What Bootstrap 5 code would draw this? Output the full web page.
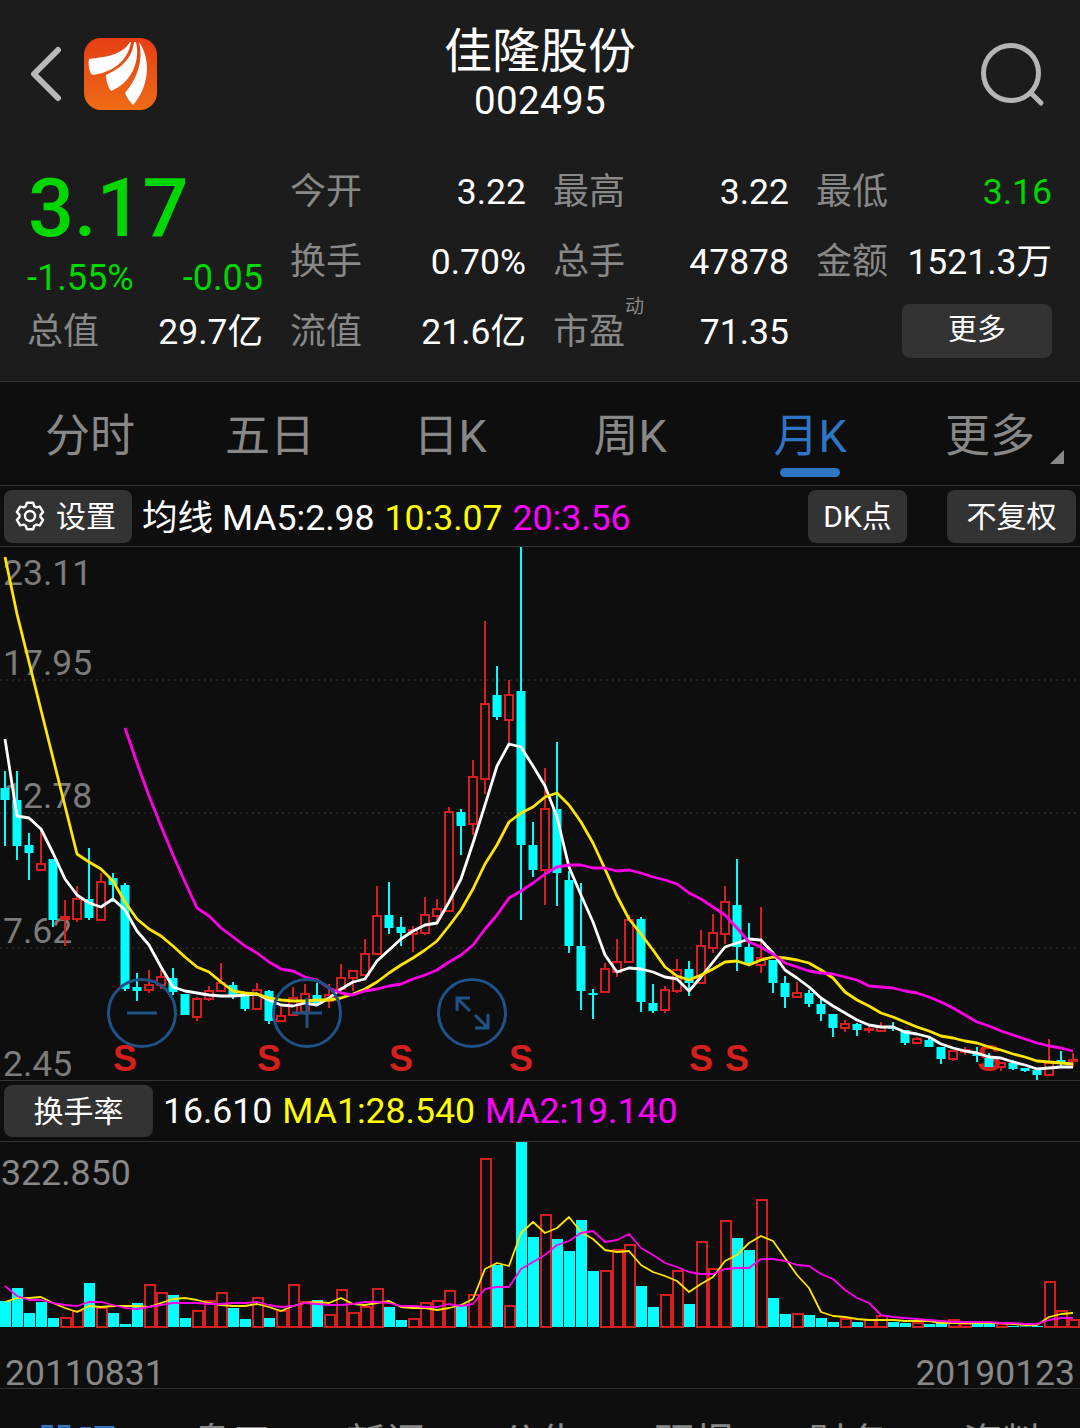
<!DOCTYPE html>
<html lang="zh-CN">

<head>
    <meta charset="UTF-8">
    <meta name="viewport" content="width=device-width, initial-scale=1.0">
    <title>佳隆股份 002495</title>

    <link href="https://cdn.jsdelivr.net/npm/bootstrap@5.3.3/dist/css/bootstrap.min.css" rel="stylesheet">
    <script src="https://cdn.jsdelivr.net/npm/bootstrap@5.3.3/dist/js/bootstrap.bundle.min.js"></script>

    <style>
        html, body { width: 1080px; height: 1428px; overflow: hidden; }
        body { background: #0e0e0e; color: #fff; font-family: "Roboto", "Noto Sans CJK SC", sans-serif; }
        .c-green { color: #00d600; }
        .c-yellow { color: #ffff00; }
        .c-pink { color: #ff00ff; }

        .quote-box { background: #1c1c1c; height: 382px; border-bottom: 1px solid #333; }
        .head-row { height: 158px; }
        .head-side { width: 200px; height: 156px; }
        .back-icon { margin: 46px 0 0 28px; }
        .logo-icon { margin: 38px 0 0 22px; }
        .search-icon { margin: 40px 34px 0 0; }
        .stock-name { font-size: 48px; line-height: 52px; padding-top: 26px; }
        .stock-code { font-size: 38.5px; line-height: 46px; letter-spacing: .4px; }

        .stat-left { width: 235px; margin-left: 28px; }
        .big-price { font-size: 81px; line-height: 102px; font-weight: 500; height: 102px; }
        .sub-row { font-size: 36px; height: 36px; line-height: 36px; margin: 0 0 2px -1px; }
        .stat-grid { display: grid; grid-template-columns: repeat(3, 235px); column-gap: 28px; margin-left: 28px; }
        .stat-cell { height: 70px; font-size: 35.5px; }
        .stat-label { color: #888; font-size: 36px; position: relative; margin: -2px 0 0 -1px; }
        .stat-tag { position: absolute; left: 72px; top: -12px; font-size: 19px; }
        .more-btn { width: 150px; height: 54px; font-size: 29px; margin-bottom: 4px; }

        .kbtn { background: #333; color: #fff; border: 0; border-radius: 8px; padding: 0; }
        .kbtn:hover { background: #333; color: #fff; }

        .period-tabs { height: 104px; border-bottom: 1px solid #333; }
        .period-tabs .nav-link { color: #888; font-size: 45px; line-height: 103px; padding: 3px 0 0; position: relative; }
        .period-tabs .nav-link.active { color: #2e75c3; }
        .period-tabs .nav-link.active::after { content: ""; position: absolute; left: 60px; bottom: 11px; width: 60px; height: 9px; border-radius: 5px; background: #2e75c3; }
        .more-corner { position: absolute; right: 16px; bottom: 24px; width: 0; height: 0; border-left: 14px solid transparent; border-bottom: 14px solid #888; }

        .info-row { height: 61px; border-bottom: 1px solid #333; }
        .set-btn { width: 128px; height: 53px; margin-left: 4px; padding-left: 11px; font-size: 30px; gap: 11px; }
        .ma-text { font-size: 35.6px; margin: 6px 0 0 10px; white-space: nowrap; }
        .ma-text span { margin-right: 10px; }
        .dk-btn { width: 99px; height: 53px; font-size: 30px; margin-right: 40px; }
        .fq-btn { width: 129px; height: 53px; font-size: 30px; margin-right: 4px; }

        .kline-box { height: 534px; border-bottom: 1px solid #333; }
        .kline-box svg, .vol-box svg { position: absolute; left: 0; top: 0; }
        .axis-label { position: absolute; left: 3px; color: #7c7c7c; font-size: 35.5px; line-height: 40px; }
        .sell-mark { position: absolute; top: 492px; width: 30px; text-align: center; color: #d61f1f; font: bold 36px/40px "Liberation Sans", sans-serif; }

        .vol-info { height: 61px; border-bottom: 1px solid #333; }
        .vol-btn { width: 149px; height: 52px; margin-left: 4px; font-size: 30px; }
        .vol-text { font-size: 35.6px; margin: 2px 0 0 10px; white-space: nowrap; }
        .vol-text span { margin-right: 10px; }
        .vol-box { height: 187px; }
        .vol-label { position: absolute; left: 1px; top: 11px; color: #888; font-size: 35.7px; line-height: 40px; }
        .date-row { height: 60px; padding: 24px 5px 0; color: #888; font-size: 35.5px; line-height: 40px; border-bottom: 1px solid #333; }

        .news-tabs .nav-link { color: #888; font-size: 40px; line-height: 110px; padding: 0; }
        .news-tabs .nav-link.active { color: #2e75c3; }
    </style>
</head>

<body>
    <div class="quote-box">
        <div class="head-row d-flex">
            <div class="head-side d-flex align-items-start">
                <svg class="back-icon" width="34" height="56" viewBox="0 0 34 56">
                    <path d="M30 4 L6 28 L30 52" fill="none" stroke="#b9b9b9" stroke-width="6" stroke-linecap="round" stroke-linejoin="round" />
                </svg>
                <svg class="logo-icon flex-shrink-0" width="73" height="72" viewBox="0 0 73 72">
                    <defs>
                        <linearGradient id="logoFill" x1="0" y1="0" x2="0" y2="1">
                            <stop offset="0" stop-color="#e63e14" />
                            <stop offset="1" stop-color="#ee6c16" />
                        </linearGradient>
                    </defs>
                    <rect width="73" height="72" rx="17" fill="url(#logoFill)" />
                    <path d="M46 4 C38 17 22 19 5 21 C4 27 5 33 8 37 C27 35 44 24 47 4 Z" fill="#fff" />
                    <path d="M50 4 C48 22 35 31 22 37 C22 43 24 49 27 53 C45 46 57 26 52 4 Z" fill="#fff" />
                    <path d="M55 4 C60 24 52 42 41 55 C43 60 46 64 49 67 C63 52 69 24 55 4 Z" fill="#fff" />
                </svg>
            </div>
            <div class="flex-grow-1 text-center">
                <div class="stock-name">佳隆股份</div>
                <div class="stock-code">002495</div>
            </div>
            <div class="head-side d-flex justify-content-end align-items-start">
                <svg class="search-icon" width="66" height="68" viewBox="0 0 66 68">
                    <circle cx="31" cy="33" r="27.5" fill="none" stroke="#b5b5b5" stroke-width="5" />
                    <path d="M51 53 L61 63" fill="none" stroke="#b5b5b5" stroke-width="5" stroke-linecap="round" />
                </svg>
            </div>
        </div>

        <div class="d-flex">
            <div class="stat-left">
                <div class="big-price c-green">3.17</div>
                <div class="sub-row c-green d-flex justify-content-between"><span>-1.55%</span><span>-0.05</span></div>
                <div class="stat-cell d-flex justify-content-between align-items-center">
                    <span class="stat-label">总值</span><span>29.7亿</span>
                </div>
            </div>
            <div class="stat-grid">
                <div class="stat-cell d-flex justify-content-between align-items-center"><span class="stat-label">今开</span><span>3.22</span></div>
                <div class="stat-cell d-flex justify-content-between align-items-center"><span class="stat-label">最高</span><span>3.22</span></div>
                <div class="stat-cell d-flex justify-content-between align-items-center"><span class="stat-label">最低</span><span class="c-green">3.16</span></div>
                <div class="stat-cell d-flex justify-content-between align-items-center"><span class="stat-label">换手</span><span>0.70%</span></div>
                <div class="stat-cell d-flex justify-content-between align-items-center"><span class="stat-label">总手</span><span>47878</span></div>
                <div class="stat-cell d-flex justify-content-between align-items-center"><span class="stat-label">金额</span><span>1521.3万</span></div>
                <div class="stat-cell d-flex justify-content-between align-items-center"><span class="stat-label">流值</span><span>21.6亿</span></div>
                <div class="stat-cell d-flex justify-content-between align-items-center"><span class="stat-label">市盈<span class="stat-tag">动</span></span><span>71.35</span></div>
                <div class="stat-cell d-flex justify-content-end align-items-center"><button type="button" class="btn kbtn more-btn">更多</button></div>
            </div>
        </div>
    </div>

    <ul class="nav nav-justified period-tabs">
        <li class="nav-item"><a class="nav-link" href="#">分时</a></li>
        <li class="nav-item"><a class="nav-link" href="#">五日</a></li>
        <li class="nav-item"><a class="nav-link" href="#">日K</a></li>
        <li class="nav-item"><a class="nav-link" href="#">周K</a></li>
        <li class="nav-item"><a class="nav-link active" href="#">月K</a></li>
        <li class="nav-item"><a class="nav-link" href="#">更多<span class="more-corner"></span></a></li>
    </ul>

    <div class="info-row d-flex align-items-center">
        <button type="button" class="btn kbtn set-btn d-flex align-items-center">
            <svg width="30" height="30" viewBox="0 0 30 30">
                <path id="gearPath" fill="none" stroke="#fff" stroke-width="2.4" stroke-linejoin="round" />
                <circle cx="15" cy="15" r="5" fill="none" stroke="#fff" stroke-width="2.4" />
            </svg>
            设置
        </button>
        <div class="ma-text flex-grow-1"><span>均线 MA5:2.98</span><span class="c-yellow">10:3.07</span><span class="c-pink">20:3.56</span></div>
        <button type="button" class="btn kbtn dk-btn">DK点</button>
        <button type="button" class="btn kbtn fq-btn">不复权</button>
    </div>

    <div class="kline-box position-relative">
        <div class="axis-label" style="top: 6px">23.11</div>
        <div class="axis-label" style="top: 96px">17.95</div>
        <div class="axis-label" style="top: 229px">12.78</div>
        <div class="axis-label" style="top: 364px">7.62</div>
        <div class="axis-label" style="top: 497px">2.45</div>
        <div class="sell-mark" style="left: 110px">S</div>
        <div class="sell-mark" style="left: 254px">S</div>
        <div class="sell-mark" style="left: 386px">S</div>
        <div class="sell-mark" style="left: 506px">S</div>
        <div class="sell-mark" style="left: 686px">S</div>
        <div class="sell-mark" style="left: 722px">S</div>
        <div class="sell-mark" style="left: 974px">S</div>
        <svg id="klineChart" width="1080" height="533" viewBox="0 547 1080 533"></svg>
    </div>

    <div class="vol-info d-flex align-items-center">
        <button type="button" class="btn kbtn vol-btn">换手率</button>
        <div class="vol-text"><span>16.610</span><span class="c-yellow">MA1:28.540</span><span class="c-pink">MA2:19.140</span></div>
    </div>

    <div class="vol-box position-relative">
        <div class="vol-label">322.850</div>
        <svg id="volChart" width="1080" height="187" viewBox="0 1142 1080 187"></svg>
    </div>
    <div class="date-row d-flex justify-content-between">
        <span>20110831</span><span>20190123</span>
    </div>

    <ul class="nav nav-justified news-tabs">
        <li class="nav-item"><a class="nav-link active" href="#">股吧</a></li>
        <li class="nav-item"><a class="nav-link" href="#">盘口</a></li>
        <li class="nav-item"><a class="nav-link" href="#">新闻</a></li>
        <li class="nav-item"><a class="nav-link" href="#">公告</a></li>
        <li class="nav-item"><a class="nav-link" href="#">研报</a></li>
        <li class="nav-item"><a class="nav-link" href="#">财务</a></li>
        <li class="nav-item"><a class="nav-link" href="#">资料</a></li>
    </ul>

    <script>
        const CYAN = '#00ffff';
        const RED = '#d61f1f';

        // c = falls (filled), r = rises (hollow): high, body top, body bottom, low
        const candles = [
            ['c',771,788,800,846],['c',771,800,846,860],['c',833,845,853,880],['r',831,864,870,871],['c',859,859,920,927],
            ['r',900,917,919,946],['r',886,899,919,922],['c',848,899,918,920],['r',873,882,920,920],['c',873,878,885,902],
            ['c',883,885,989,991],['c',973,987,991,1001],['r',970,985,990,993],['r',970,977,985,989],['c',968,978,992,995],
            ['c',994,994,1015,1015],['r',997,999,1017,1021],['r',986,991,999,1001],['r',963,983,991,991],['c',982,985,995,999],
            ['c',995,996,1009,1011],['r',983,990,1009,1010],['c',990,991,1021,1024],['r',1007,1016,1021,1021],['r',987,998,1015,1015],
            ['r',984,994,1012,1015],['c',983,995,1003,1005],['r',984,995,1001,1008],['r',964,978,989,994],['r',970,971,978,991],
            ['r',939,954,975,976],['r',886,916,954,955],['c',882,915,928,934],['c',917,927,933,946],['r',926,930,934,952],
            ['r',897,915,933,935],['r',899,909,916,922],['r',807,812,911,911],['c',809,812,826,855],['r',760,777,824,835],
            ['r',621,704,779,794],['c',666,695,717,720],['r',680,695,720,743],['c',546,691,845,920],['c',822,845,870,877],
            ['r',768,809,870,905],['c',742,809,873,906],['c',871,880,946,953],['c',883,946,991,1010],['c',989,993,995,1019],
            ['r',963,969,992,992],['r',939,962,972,977],['r',915,920,962,962],['c',917,919,1002,1012],['c',984,1003,1011,1013],
            ['r',986,990,1010,1013],['r',959,970,991,993],['c',961,969,983,996],['r',930,946,983,983],['r',914,933,948,953],
            ['r',886,902,934,944],['c',859,905,947,971],['c',923,947,964,965],['r',907,958,965,973],['c',960,960,983,993],
            ['c',976,983,997,1008],['r',982,993,997,997],['c',990,993,1004,1007],['c',999,1004,1014,1021],['c',1014,1014,1028,1037],
            ['r',1020,1024,1028,1032],['c',1023,1024,1030,1036],['r',1025,1029,1030,1033],['r',1022,1027,1031,1031],['c',1022,1027,1029,1031],
            ['c',1030,1030,1043,1045],['r',1037,1039,1043,1044],['c',1038,1040,1047,1047],['c',1047,1047,1059,1064],['r',1050,1051,1059,1061],
            ['r',1047,1050,1052,1055],['c',1047,1053,1056,1062],['c',1053,1058,1067,1067],['r',1062,1063,1067,1071],['c',1060,1063,1069,1070],
            ['c',1068,1068,1071,1072],['c',1070,1070,1075,1080],['r',1039,1063,1075,1076],['c',1051,1060,1062,1067],['r',1053,1060,1061,1067]
        ];

        const ma5 = [739,816,818,829,853,879,895,903,907,899,910,931,945,967,987,991,993,995,996,996,995,994,1000,1005,1006,1003,1005,998,989,982,
            979,961,950,939,931,925,923,902,879,843,805,766,744,747,766,786,817,867,895,922,955,972,968,969,972,977,979,991,977,962,
            947,943,939,940,953,970,978,987,998,1006,1013,1020,1025,1027,1027,1032,1034,1037,1044,1048,1051,1053,1057,1058,1062,1065,1069,1068,1067,1067];
        const ma10 = [557,614,662,710,758,806,854,862,869,881,902,919,929,936,946,957,967,972,982,991,993,994,998,1000,1001,1001,1000,1000,998,994,
            989,982,973,965,958,950,941,926,910,889,864,845,822,813,807,797,793,805,822,843,869,896,919,934,950,967,976,980,975,969,
            962,961,965,960,957,958,960,963,970,978,992,1000,1006,1013,1017,1022,1027,1031,1036,1038,1041,1043,1047,1050,1054,1057,1061,1062,1063,1064];
        // the 20 month line only starts at candle 10
        const ma20 = [728,763,796,826,855,882,908,916,928,937,946,953,962,969,971,977,980,988,993,995,
            991,989,986,984,979,975,970,962,955,945,929,915,898,891,883,874,867,865,865,868,868,871,870,873,877,880,884,893,899,907,
            915,928,942,947,954,963,967,971,973,974,977,980,986,987,988,991,993,997,1002,1008,1015,1022,1026,1031,1035,1039,1043,1046,1048,1051];

        // volume bars, top of bar as offset from y 1140
        const bars = [
            ['c',161],['c',148],['c',173],['c',162],['c',178],['r',178],['r',171],['c',143],['r',168],['c',173],
            ['c',184],['c',163],['r',145],['r',153],['c',155],['c',178],['r',171],['r',161],['r',153],['c',168],
            ['c',179],['r',158],['c',178],['r',171],['r',145],['r',162],['c',160],['r',175],['r',150],['r',173],
            ['r',167],['r',149],['c',167],['c',180],['r',179],['r',163],['r',161],['r',151],['c',166],['r',155],
            ['r',19],['c',125],['r',166],['c',2],['c',97],['r',75],['c',99],['c',111],['c',80],['c',131],
            ['r',131],['r',110],['r',105],['c',146],['c',167],['r',155],['r',131],['c',164],['r',102],['r',129],
            ['r',81],['c',98],['c',110],['r',60],['c',158],['c',174],['r',174],['c',175],['c',178],['c',182],
            ['r',179],['c',182],['r',180],['r',176],['c',182],['c',183],['r',183],['c',184],['c',182],['r',180],
            ['r',184],['c',184],['c',183],['r',184],['c',186],['c',186.5],['c',186],['r',142],['r',171],['r',180]
        ];
        const volMa1 = [162,158,158,157,163,168,172,166,167,166,166,166,167,163,159,158,160,163,165,166,166,164,167,171,166,163,162,163,158,164,
            165,163,161,167,168,168,170,168,165,159,129,123,126,93,82,93,88,77,92,99,110,112,111,125,132,136,141,152,144,137,
            121,115,103,96,101,118,135,148,172,176,177,179,180,180,180,181,181,181,183,183,183,183,183,183,184,185,185,177,174,173];
        const volMa2 = [146,156,160,160,163,165,166,162,162,165,168,169,167,165,163,163,163,164,164,163,163,162,165,167,166,163,164,165,165,164,
            162,162,163,166,166,167,167,164,166,164,149,147,147,129,122,115,105,101,93,91,102,100,94,108,115,123,127,132,134,134,
            129,128,128,119,119,121,125,126,134,139,150,158,163,175,177,178,179,180,181,182,182,182,182,183,183,184,184,180,178,178];

        function polyline(points, color, width) {
            return '<polyline points="' + points.join(' ') + '" fill="none" stroke="' + color + '" stroke-width="' + width + '" stroke-linejoin="round" />';
        }

        function drawKline() {
            let html = '';
            [680, 813, 948].forEach(y => {
                html += '<line x1="0" x2="1080" y1="' + y + '" y2="' + y + '" stroke="#3a3a3a" stroke-width="1" stroke-dasharray="2 4" />';
            });

            candles.forEach((c, i) => {
                const x = 5 + 12 * i;
                if (c[0] === 'c') {
                    html += '<rect x="' + (x - 1) + '" y="' + c[1] + '" width="2" height="' + (c[4] - c[1]) + '" fill="' + CYAN + '" />';
                    html += '<rect x="' + (x - 4.5) + '" y="' + c[2] + '" width="9" height="' + Math.max(c[3] - c[2], 2) + '" fill="' + CYAN + '" />';
                } else {
                    html += '<rect x="' + (x - 1) + '" y="' + c[1] + '" width="2" height="' + (c[2] - c[1]) + '" fill="' + RED + '" />';
                    html += '<rect x="' + (x - 1) + '" y="' + c[3] + '" width="2" height="' + (c[4] - c[3]) + '" fill="' + RED + '" />';
                    html += '<rect x="' + (x - 4) + '" y="' + c[2] + '" width="8" height="' + Math.max(c[3] - c[2], 1) + '" fill="none" stroke="' + RED + '" stroke-width="2" />';
                }
            });

            html += polyline(ma5.map((y, i) => (5 + 12 * i) + ',' + y), '#ffffff', 2.8);
            html += polyline(ma10.map((y, i) => (5 + 12 * i) + ',' + y), '#ffe600', 2.8);
            html += polyline(ma20.map((y, i) => (125 + 12 * i) + ',' + y), '#ff00e6', 2.8);

            // zoom buttons lie over the candles
            const blue = '#1f5286';
            [142, 307, 472].forEach(x => {
                html += '<circle cx="' + x + '" cy="1013" r="33.5" fill="none" stroke="' + blue + '" stroke-width="3" />';
            });
            html += '<path d="M127 1013 H157 M292 1013 H322 M307 998 V1028" fill="none" stroke="' + blue + '" stroke-width="3" />';
            html += '<path d="M457 1011 V998 H470 M458 999 L470 1011 M475 1015 L487 1027 M488 1014 V1028 H475" fill="none" stroke="' + blue + '" stroke-width="3" />';

            document.getElementById('klineChart').innerHTML = html;
        }

        function drawVolume() {
            let html = '';
            bars.forEach((b, i) => {
                const top = 1140 + b[1];
                if (b[0] === 'c') {
                    html += '<rect x="' + (12 * i) + '" y="' + top + '" width="11" height="' + (1327 - top) + '" fill="' + CYAN + '" />';
                } else {
                    html += '<rect x="' + (12 * i + 1) + '" y="' + top + '" width="10" height="' + (1327 - top) + '" fill="none" stroke="' + RED + '" stroke-width="2" />';
                }
            });
            html += polyline(volMa1.map((v, i) => (5 + 12 * i) + ',' + (1140 + v)), '#ffe600', 1.8);
            html += polyline(volMa2.map((v, i) => (5 + 12 * i) + ',' + (1140 + v)), '#ff00e6', 1.8);
            document.getElementById('volChart').innerHTML = html;
        }

        // six tooth cog for the settings button
        function drawGear() {
            let d = '';
            for (let t = 0; t < 6; t++) {
                const a = (-90 + 60 * t) * Math.PI / 180;
                const pts = [[10.6, -0.42], [13.6, -0.24], [13.6, 0.24], [10.6, 0.42]];
                pts.forEach(p => {
                    const x = 15 + p[0] * Math.cos(a + p[1]);
                    const y = 15 + p[0] * Math.sin(a + p[1]);
                    d += (d === '' ? 'M' : 'L') + x.toFixed(1) + ' ' + y.toFixed(1) + ' ';
                });
            }
            document.getElementById('gearPath').setAttribute('d', d + 'Z');
        }

        drawKline();
        drawVolume();
        drawGear();
    </script>
</body>

</html>
